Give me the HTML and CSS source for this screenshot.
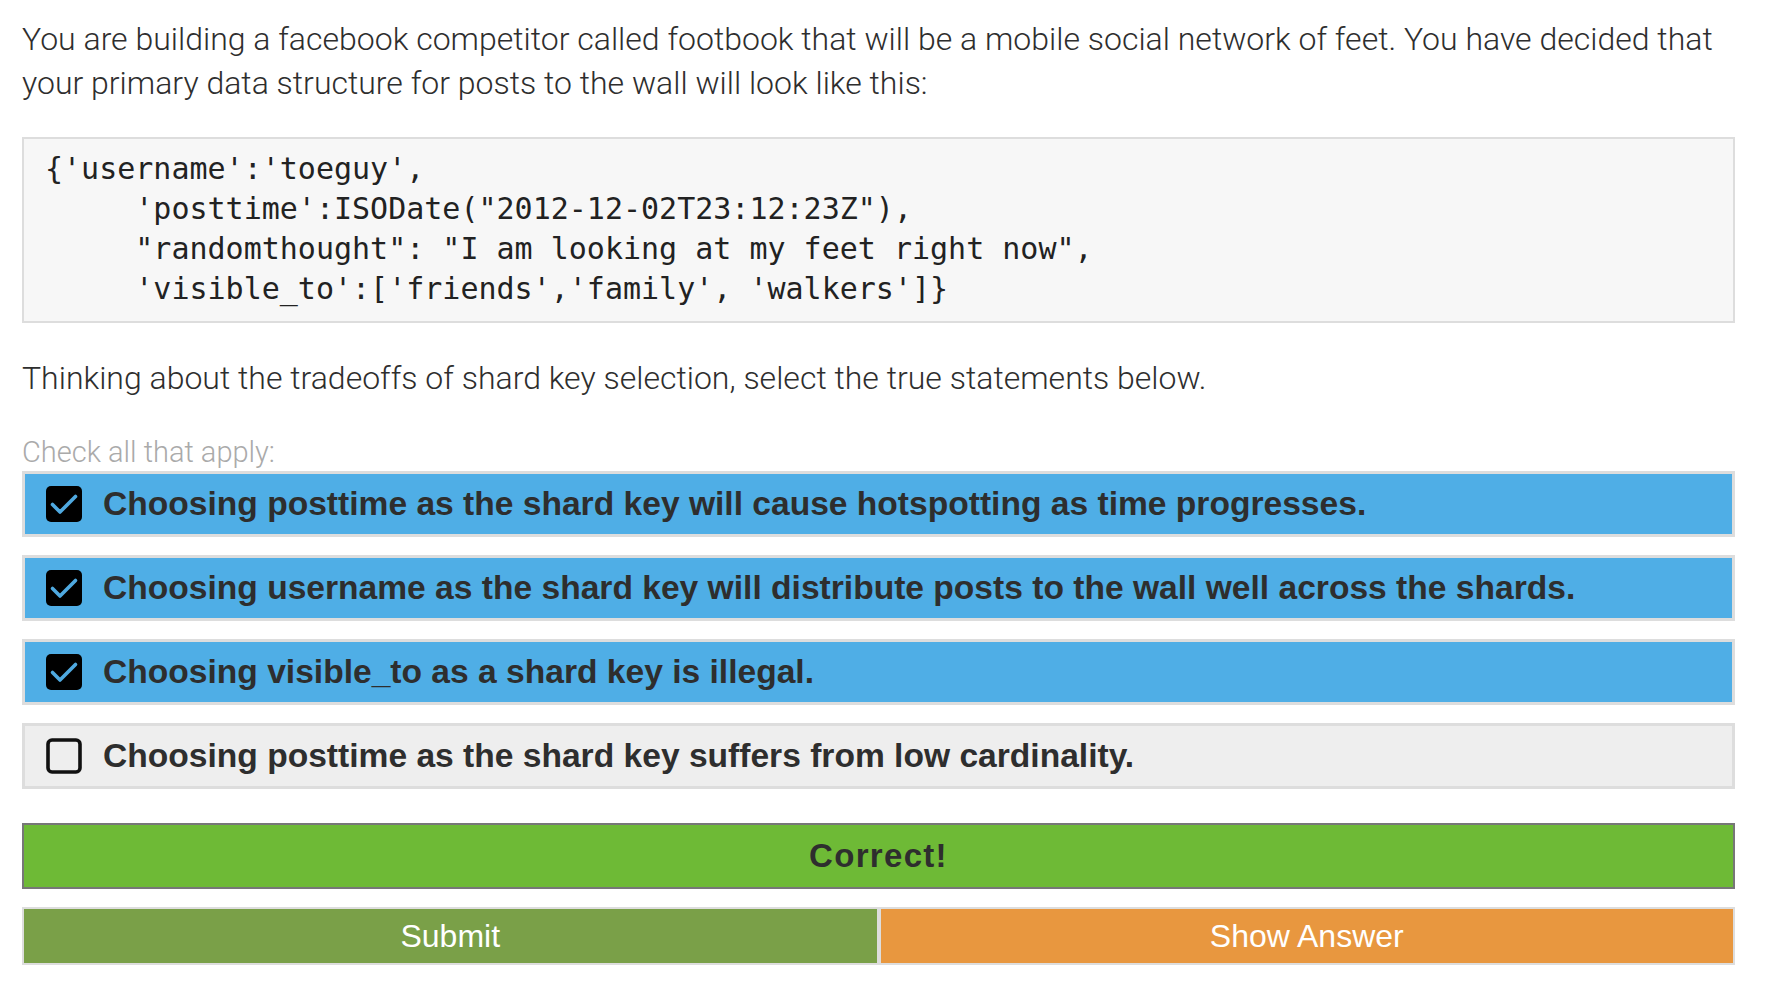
FILE: index.html
```html
<!DOCTYPE html>
<html lang="en">
<head>
<meta charset="utf-8">
<title>Shard key quiz</title>
<link rel="stylesheet" href="styles.css">
</head>
<body>
<main class="problem">
  <p class="prompt">You are building a facebook competitor called footbook that will be a mobile social network of feet. You have decided that your primary data structure for posts to the wall will look like this:</p>
  <pre class="code">{'username':'toeguy',
     'posttime':ISODate("2012-12-02T23:12:23Z"),
     "randomthought": "I am looking at my feet right now",
     'visible_to':['friends','family', 'walkers']}</pre>
  <p class="prompt second">Thinking about the tradeoffs of shard key selection, select the true statements below.</p>
  <div class="hint">Check all that apply:</div>
  <div class="choices">
    <div class="choice checked">
      <span class="box"><svg viewBox="0 0 36 36" width="36" height="36"><rect x="0" y="0" width="36" height="36" rx="5" fill="#000"/><polyline points="6.5,18.5 14,26 29.5,10.5" fill="none" stroke="#4fa9e0" stroke-width="3.6" stroke-linecap="round" stroke-linejoin="round"/></svg></span>
      <span class="label">Choosing posttime as the shard key will cause hotspotting as time progresses.</span>
    </div>
    <div class="choice checked">
      <span class="box"><svg viewBox="0 0 36 36" width="36" height="36"><rect x="0" y="0" width="36" height="36" rx="5" fill="#000"/><polyline points="6.5,18.5 14,26 29.5,10.5" fill="none" stroke="#4fa9e0" stroke-width="3.6" stroke-linecap="round" stroke-linejoin="round"/></svg></span>
      <span class="label">Choosing username as the shard key will distribute posts to the wall well across the shards.</span>
    </div>
    <div class="choice checked">
      <span class="box"><svg viewBox="0 0 36 36" width="36" height="36"><rect x="0" y="0" width="36" height="36" rx="5" fill="#000"/><polyline points="6.5,18.5 14,26 29.5,10.5" fill="none" stroke="#4fa9e0" stroke-width="3.6" stroke-linecap="round" stroke-linejoin="round"/></svg></span>
      <span class="label">Choosing visible_to as a shard key is illegal.</span>
    </div>
    <div class="choice">
      <span class="box"><svg viewBox="0 0 36 36" width="36" height="36"><rect x="2" y="2" width="32" height="32" rx="4" fill="none" stroke="#111" stroke-width="3.6"/></svg></span>
      <span class="label">Choosing posttime as the shard key suffers from low cardinality.</span>
    </div>
  </div>
  <div class="feedback">Correct!</div>
  <div class="actions">
    <button class="btn submit">Submit</button>
    <button class="btn answer">Show Answer</button>
  </div>
</main>
</body>
</html>
```

FILE: styles.css
```css
html, body {
  margin: 0;
  padding: 0;
  background: #fff;
}

.problem {
  width: 1713px;
  margin-left: 22px;
  padding-top: 17px;
  font-family: Roboto, "Liberation Sans", sans-serif;
  color: #333;
}

.prompt {
  margin: 0;
  font-size: 32px;
  font-weight: 300;
  line-height: 44px;
  color: #2e2e2e;
}

.prompt.second {
  margin-top: 33px;
}

.code {
  margin: 32px 0 0 0;
  box-sizing: border-box;
  height: 186px;
  padding: 10px 20px 12px 21px;
  background: #f7f7f7;
  border: 2px solid #dddddd;
  font-family: "DejaVu Sans Mono", "Liberation Mono", monospace;
  font-size: 30px;
  line-height: 40px;
  color: #222;
  white-space: pre;
}

.hint {
  margin-top: 34px;
  height: 36px;
  font-size: 29px;
  font-weight: 300;
  line-height: 36px;
  color: #aaaaaa;
}

.choices {
  margin-top: 1px;
  display: flex;
  flex-direction: column;
  gap: 18px;
}

.choice {
  height: 66px;
  box-sizing: border-box;
  display: flex;
  align-items: center;
  gap: 21px;
  padding-left: 21px;
  background: #eeeeee;
  border: 3px solid #dddddd;
}

.choice.checked {
  background: #4faee6;
}

.box {
  display: flex;
  width: 36px;
  height: 36px;
  flex: none;
}

.label {
  font-family: "Liberation Sans", Arial, sans-serif;
  font-weight: 700;
  font-size: 33.6px;
  color: #2e2e2e;
}

.feedback {
  margin-top: 34px;
  height: 66px;
  box-sizing: border-box;
  display: flex;
  align-items: center;
  justify-content: center;
  background: #6eba36;
  border: 2px solid #777777;
  font-family: "Liberation Sans", Arial, sans-serif;
  font-weight: 700;
  font-size: 33px;
  letter-spacing: 1.3px;
  color: #2e2e2e;
}

.actions {
  margin-top: 18px;
  display: flex;
}

.btn {
  flex: 1;
  height: 58px;
  box-sizing: border-box;
  margin: 0;
  padding: 0;
  border: 2px solid #dddddd;
  font-family: "Liberation Sans", Arial, sans-serif;
  font-size: 32px;
  color: #fff;
  cursor: pointer;
}

.submit {
  background: #7aa048;
}

.answer {
  background: #e8973f;
}
```
